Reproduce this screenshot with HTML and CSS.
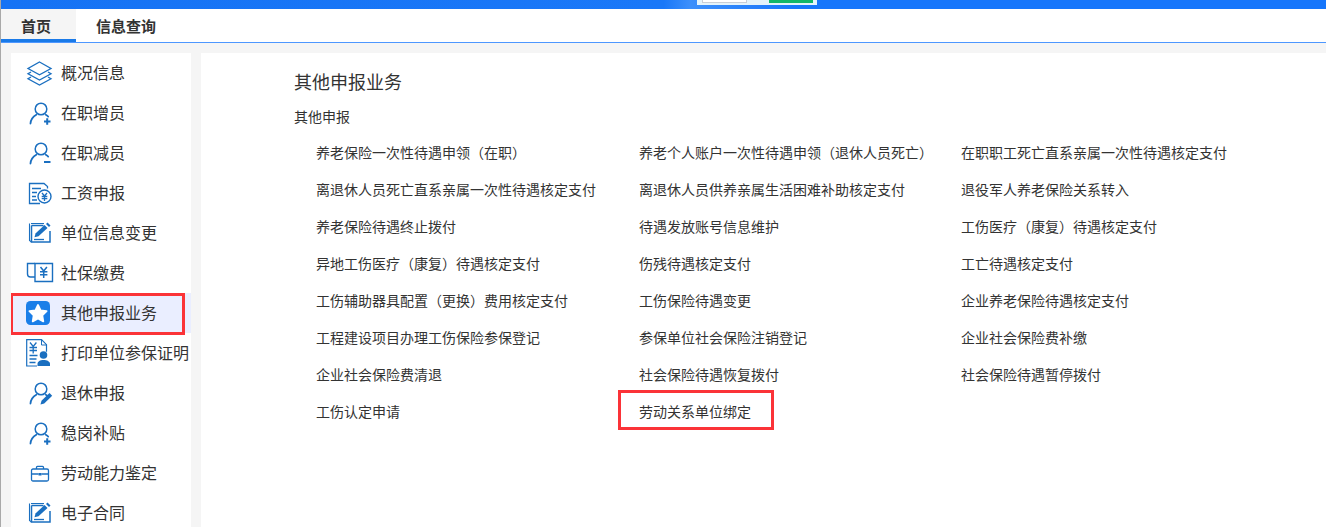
FILE: index.html
```html
<!DOCTYPE html>
<html lang="zh-CN">
<head>
<meta charset="utf-8">
<title>其他申报业务</title>
<link rel="stylesheet" href="styles.css">
</head>
<body>
<svg class="defs" width="0" height="0" aria-hidden="true">
  <defs>
    <symbol id="person" viewBox="0 0 24 24" overflow="visible"><circle cx="15" cy="8" r="5.800" fill="none" stroke="currentColor" stroke-width="1.500"/><path d="M4.500 22.500c.3-3.800 2.400-6.800 5.800-8.700M19.800 13.800c1 .6 1.700 1.100 2.400 1.800" fill="none" stroke="currentColor" stroke-width="1.800" stroke-linecap="round"/></symbol>
    <symbol id="edit" viewBox="0 0 24 24" overflow="visible"><path d="M5 2.500h13M3.500 2.500v17l2 1.500" fill="none" stroke="currentColor" stroke-width="1.100"/><path d="M5.500 4.500h12M5.500 4.500v16.500h18.500V10" fill="none" stroke="currentColor" stroke-width="1.500"/><path d="M8.500 16.200l1-3.700 9-8.500 3 3-9 8.300z" fill="currentColor"/><path d="M20 3l1.500-1.500 3 3L23 6z" fill="currentColor"/><path d="M8 18.500h10" stroke="currentColor" stroke-width="1.300"/></symbol>
  </defs>
</svg>
<header class="topbar"><div class="notch"><span class="notch-white"></span><span class="notch-green"></span></div></header>
<nav class="tabs">
  <a class="tab tab-active">首页</a>
  <a class="tab">信息查询</a>
</nav>
<div class="main">
  <aside class="side">
    <div class="item"><svg class="ic" viewBox="0 0 24 24"><path d="M13.500 1L25 7.500l-11.500 6.300L2 7.500z" fill="none" stroke="currentColor" stroke-width="1.300"/><path d="M5 11L2 12.700l11.500 6.300L25 12.700 22 11M5 16l-3 1.700L13.500 24 25 17.700 22 16" fill="none" stroke="currentColor" stroke-width="1.300"/></svg><span>概况信息</span></div>
    <div class="item"><svg class="ic"><use href="#person"/><path d="M18 20.500h6.500M21.200 17.200v6.600" stroke="#1a6fc0" stroke-width="2"/></svg><span>在职增员</span></div>
    <div class="item"><svg class="ic"><use href="#person"/><path d="M18 21h6.500" stroke="#1a6fc0" stroke-width="2"/></svg><span>在职减员</span></div>
    <div class="item"><svg class="ic" viewBox="0 0 24 24"><path d="M14 22.500H3.500V2.500h14.500l3.500 3v2" fill="none" stroke="currentColor" stroke-width="1.300"/><path d="M6 7.500h9M6 11.500h5M6 15.500h4M6 19h5" stroke="currentColor" stroke-width="1.300"/><circle cx="18.500" cy="15.500" r="6.500" fill="none" stroke="currentColor" stroke-width="1.400"/><path d="M16 12l2.500 3 2.500-3M15.700 15.500h5.600M15.700 17.700h5.600M18.500 15v5" fill="none" stroke="currentColor" stroke-width="1.300"/></svg><span>工资申报</span></div>
    <div class="item"><svg class="ic"><use href="#edit"/></svg><span>单位信息变更</span></div>
    <div class="item"><svg class="ic" viewBox="0 0 24 24"><path d="M9 16H4.500C2.500 16 1.500 15 1.500 13V2.500H9" fill="none" stroke="currentColor" stroke-width="1.400"/><path d="M9 2.500h17.500v18H9z" fill="none" stroke="currentColor" stroke-width="1.400"/><path d="M14.500 6l3.200 4 3.200-4M14 10.800h7.400M14 13.800h7.400M17.700 10.500V17" fill="none" stroke="currentColor" stroke-width="1.500"/></svg><span>社保缴费</span></div>
    <div class="item item-active"><svg class="ic" viewBox="0 0 24 24"><rect width="24" height="24" rx="4.500" fill="#1a7ee8"/><path d="M12 4l2.600 5.400 6 .8-4.300 4.200 1 6-5.300-2.900-5.300 2.900 1-6-4.300-4.200 6-.8z" fill="#fff" stroke="#fff" stroke-width="1.800" stroke-linejoin="round"/></svg><span>其他申报业务</span><i class="mark mark-side"></i></div>
    <div class="item"><svg class="ic ic-tall" viewBox="0 0 24 28"><path d="M11 27H.7V.7h14.800l5 5v7" fill="none" stroke="currentColor" stroke-width="1.200"/><path d="M15.500 1v5h5" fill="none" stroke="currentColor" stroke-width="1"/><path d="M4 3.500l3.200 4 3.200-4M3.500 8.500h7.500M3.500 11.500h7.500M7.200 8v6.500M3.500 16.500h8M3.500 20h7M3.500 23.500h6" fill="none" stroke="currentColor" stroke-width="1.300"/><circle cx="17.500" cy="16" r="3.800" fill="currentColor"/><path d="M11.500 27v-2c0-2.500 2.500-4 6-4s6.500 1.500 6.500 4v2z" fill="currentColor"/></svg><span>打印单位参保证明</span></div>
    <div class="item"><svg class="ic"><use href="#person"/><path d="M14.500 23.500l1-3.700 8-7.800 2.700 2.700-8 7.800z" fill="#1a6fc0"/></svg><span>退休申报</span></div>
    <div class="item"><svg class="ic"><use href="#person"/><path d="M18 20.500h6.500M21.200 17.200v6.600" stroke="#1a6fc0" stroke-width="2"/></svg><span>稳岗补贴</span></div>
    <div class="item"><svg class="ic" viewBox="0 0 24 24"><rect x="5.500" y="8" width="17" height="12" rx="1.500" fill="none" stroke="currentColor" stroke-width="1.300"/><path d="M10.500 8V6.300c0-.5.500-1 1-1h5c.5 0 1 .5 1 1V8M5.500 13h7M15.500 13h7" fill="none" stroke="currentColor" stroke-width="1.300"/><rect x="12.500" y="12" width="3" height="2.500" fill="currentColor"/></svg><span>劳动能力鉴定</span></div>
    <div class="item"><svg class="ic"><use href="#edit"/></svg><span>电子合同</span></div>
  </aside>
  <main class="content">
    <h1 class="title">其他申报业务</h1>
    <h2 class="subtitle">其他申报</h2>
    <div class="grid">
      <a>养老保险一次性待遇申领（在职）</a>
      <a>养老个人账户一次性待遇申领（退休人员死亡）</a>
      <a>在职职工死亡直系亲属一次性待遇核定支付</a>
      <a>离退休人员死亡直系亲属一次性待遇核定支付</a>
      <a>离退休人员供养亲属生活困难补助核定支付</a>
      <a>退役军人养老保险关系转入</a>
      <a>养老保险待遇终止拨付</a>
      <a>待遇发放账号信息维护</a>
      <a>工伤医疗（康复）待遇核定支付</a>
      <a>异地工伤医疗（康复）待遇核定支付</a>
      <a>伤残待遇核定支付</a>
      <a>工亡待遇核定支付</a>
      <a>工伤辅助器具配置（更换）费用核定支付</a>
      <a>工伤保险待遇变更</a>
      <a>企业养老保险待遇核定支付</a>
      <a>工程建设项目办理工伤保险参保登记</a>
      <a>参保单位社会保险注销登记</a>
      <a>企业社会保险费补缴</a>
      <a>企业社会保险费清退</a>
      <a>社会保险待遇恢复拨付</a>
      <a>社会保险待遇暂停拨付</a>
      <a>工伤认定申请</a>
      <a class="marked">劳动关系单位绑定<i class="mark mark-link"></i></a>
    </div>
  </main>
</div>
</body>
</html>
```
FILE: styles.css
```css
* { box-sizing: border-box; }
html, body { margin: 0; height: 527px; overflow: hidden; }
body {
  background: #f5f5f5;
  border-left: 1px solid #a9a9a9;
  font-family: "Noto Sans CJK SC", "Liberation Sans", sans-serif;
  color: #333;
  position: relative;
}
.defs { position: absolute; }
.topbar {
  height: 9px;
  background: linear-gradient(90deg, #1673f4 0%, #1a78f8 50%, #3c8ffb 52%, #1676fb 60%, #1676fb 100%);
  position: relative;
}
.notch {
  position: absolute;
  left: 696px;
  top: 0;
  width: 120px;
  height: 5px;
  background: #e4f3fa;
}
.notch-white {
  position: absolute;
  left: 5px;
  top: 0;
  width: 45px;
  height: 3px;
  background: #fff;
  border: 1px solid #c9ced6;
  border-top: 0;
}
.notch-green {
  position: absolute;
  left: 72px;
  top: 0;
  width: 44px;
  height: 3px;
  background: #12b76a;
}
.tabs {
  display: flex;
  height: 34px;
  background: #fff;
  border-bottom: 1px solid #4d97ff;
}
.tab {
  height: 33px;
  padding-top: 6px;
  font-size: 15px;
  line-height: 22px;
  font-weight: 700;
  color: #333;
}
.tab-active {
  width: 75px;
  padding-left: 20px;
  background: #f5f5f5;
  border-bottom: 3px solid #1a7ae8;
}
.tab-active + .tab { padding-left: 20px; }
.main {
  display: flex;
  gap: 10px;
  padding: 10px 0 0 10px;
}
.side {
  width: 180px;
  height: 474px;
  flex: none;
  background: #fff;
  overflow: hidden;
}
.item {
  display: flex;
  align-items: center;
  height: 40px;
  padding-left: 15px;
  font-size: 16px;
  color: #333;
  white-space: nowrap;
  position: relative;
}
.item span { margin: 0 0 2px 11px; }
.ic {
  width: 24px;
  height: 24px;
  flex: none;
  color: #1a6fc0;
  overflow: visible;
}
.ic-tall { height: 28px; }
.item-active { background: #eaeeff; }
.mark {
  position: absolute;
  border: 3px solid #fb3338;
  pointer-events: none;
}
.mark-side { left: -1px; top: 0; width: 175px; height: 42px; }
.content {
  flex: 1;
  height: 474px;
  background: #fff;
  padding: 16px 0 0 93px;
}
.title {
  margin: 0;
  font-size: 18px;
  font-weight: 400;
  line-height: 24px;
  color: #333;
}
.subtitle {
  margin: 11px 0 0;
  font-size: 14px;
  font-weight: 400;
  line-height: 24px;
  color: #333;
}
.grid {
  display: grid;
  grid-template-columns: 323px 322px 1fr;
  grid-auto-rows: 37px;
  margin: 6px 0 0 22px;
}
.grid a {
  font-size: 14px;
  line-height: 37px;
  color: #333;
  white-space: nowrap;
}
.marked { position: relative; }
.mark-link { left: -21px; top: -3px; width: 156px; height: 40px; }
```
